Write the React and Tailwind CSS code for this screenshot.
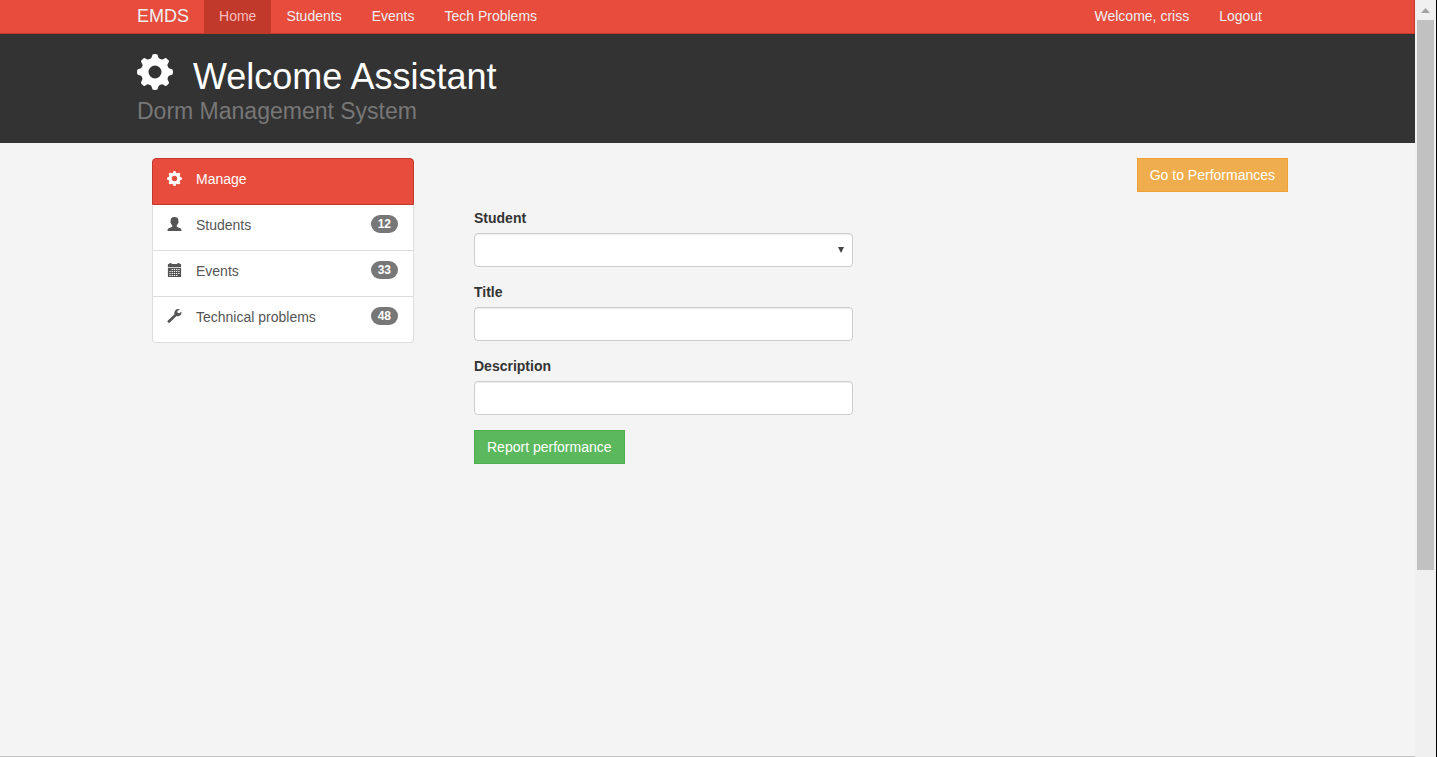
import React from "react";

const TEETH = [0, 45, 90, 135, 180, 225, 270, 315];

function GearIcon({ className }) {
  return (
    <svg viewBox="0 0 36 36" className={className} fill="currentColor" aria-hidden="true">
      <circle cx="18" cy="18" r="10.2" fill="none" stroke="currentColor" strokeWidth="7.4" />
      {TEETH.map((a) => (
        <path
          key={a}
          transform={`rotate(${a} 18 18)`}
          d="M12.6 5.6 Q14.8 4.6 15.3 1.2 Q15.4 .3 16.3 .2 Q18 0 19.7 .2 Q20.6 .3 20.7 1.2 Q21.2 4.6 23.4 5.6 L21 8 H15 Z"
        />
      ))}
    </svg>
  );
}

function UserIcon({ className }) {
  return (
    <svg viewBox="0 0 14 14" className={className} fill="currentColor" aria-hidden="true">
      <path d="M7 0C9.4 0 10.9 1.2 10.9 3.3C10.9 3.8 10.8 4.1 10.8 4.4C11.3 4.6 11.2 5.8 10.6 6.2C10.3 7.2 9.7 8 9.2 8.4V9.4C9.5 10.2 13 10.8 13.7 11.9C13.9 12.4 14 13.2 14 14H0C0 13.2 .1 12.4 .3 11.9C1 10.8 4.5 10.2 4.8 9.4V8.4C4.3 8 3.7 7.2 3.4 6.2C2.8 5.8 2.7 4.6 3.2 4.4C3.2 4.1 3.1 3.8 3.1 3.3C3.1 1.2 4.6 0 7 0Z" />
    </svg>
  );
}

function CalendarIcon({ className }) {
  return (
    <svg viewBox="0 0 14 14" className={className} fill="currentColor" aria-hidden="true">
      <path d="M2 0H4V1H10V0H12V1H13Q13.6 1 13.6 1.6V4H.4V1.6Q.4 1 1 1H2Z" />
      <path
        fillRule="evenodd"
        d="M.4 4.8H13.6V13.4Q13.6 14 13 14H1Q.4 14 .4 13.4ZM4.2 6V7.1H5.4V6ZM6.4 6V7.1H7.6V6ZM8.6 6V7.1H9.8V6ZM10.8 6V7.1H12V6ZM2 8V9.1H3.2V8ZM4.2 8V9.1H5.4V8ZM6.4 8V9.1H7.6V8ZM8.6 8V9.1H9.8V8ZM10.8 8V9.1H12V8ZM2 10V11.1H3.2V10ZM4.2 10V11.1H5.4V10ZM6.4 10V11.1H7.6V10ZM8.6 10V11.1H9.8V10ZM10.8 10V11.1H12V10ZM2 12V13H3.2V12ZM4.2 12V13H5.4V12ZM6.4 12V13H7.6V12ZM8.6 12V13H9.8V12Z"
      />
    </svg>
  );
}

function WrenchIcon({ className }) {
  return (
    <svg viewBox="0 0 14 14" className={className} fill="currentColor" aria-hidden="true">
      <path d="M12.3 .4L9.8 2L10 3.8L11.6 4.3L13.9 2.7C14.3 4.7 13.3 6.6 11.4 7.1C10.5 7.4 9.7 7.3 9 7L2.4 13.6C1.9 14.1 1.2 14.1 .7 13.6L.4 13.3C-.1 12.8 -.1 12.1 .4 11.6L7 5.2C6.6 3.9 6.8 2.5 7.8 1.4C9 .2 10.8 -.3 12.3 .4Z" />
    </svg>
  );
}

const SECTIONS = [
  { label: "Students", count: 12, Icon: UserIcon },
  { label: "Events", count: 33, Icon: CalendarIcon },
  { label: "Technical problems", count: 48, Icon: WrenchIcon },
];

const FIELD =
  "block h-[34px] w-full rounded border border-[#ccc] bg-white px-3 text-sm text-[#555] shadow-[inset_0_1px_1px_rgba(0,0,0,0.075)]";

function NavLink({ children }) {
  return (
    <a href="#" className="px-[15px] pt-[6px] text-[#ecf0f1]">
      {children}
    </a>
  );
}

function Navbar() {
  return (
    <nav className="border-r border-b border-[#c0392b] bg-[#e74c3c]">
      <div className="mx-auto flex h-[33px] max-w-[1170px] px-[15px]">
        <a href="#" className="pt-[6px] pr-[15px] text-lg leading-5 text-[#ecf0f1]">
          EMDS
        </a>
        <a href="#" aria-current="page" className="bg-[#c0392b] px-[15px] pt-[6px] text-[#ffbbbc]">
          Home
        </a>
        <NavLink>Students</NavLink>
        <NavLink>Events</NavLink>
        <NavLink>Tech Problems</NavLink>
        <div className="ml-auto flex">
          <NavLink>Welcome, criss</NavLink>
          <NavLink>Logout</NavLink>
        </div>
      </div>
    </nav>
  );
}

function PageHeader() {
  return (
    <header className="bg-[#333]">
      <div className="mx-auto max-w-[1171px] px-[15px] pt-5 pb-5">
        <h1 className="flex items-start gap-5 text-4xl leading-[46px] text-white">
          <GearIcon className="size-9" />
          Welcome Assistant
        </h1>
        <p className="text-[23px] leading-[23px] text-[#777]">Dorm Management System</p>
      </div>
    </header>
  );
}

function Sidebar() {
  return (
    <aside className="w-[262px] shrink-0">
      <a
        href="#"
        className="flex h-[47px] items-start gap-[14px] rounded-t border border-[#c0392b] bg-[#e74c3c] px-[14px] pt-[10px] text-white"
      >
        <GearIcon className="mt-[2px] size-[15px]" />
        Manage
      </a>
      <div className="overflow-hidden rounded-b border border-t-0 border-[#ddd] bg-white">
        {SECTIONS.map(({ label, count, Icon }) => (
          <a
            key={label}
            href="#"
            className="flex h-[46px] items-start gap-[14px] border-b border-[#ddd] pt-[10px] pr-[15px] pl-[14px] text-[#555] last:h-[45px] last:border-b-0"
          >
            <Icon className="mt-[2px] h-[14px] w-[15px]" />
            {label}
            <span className="ml-auto rounded-[10px] bg-[#777] px-[7px] py-[3px] text-xs leading-3 font-bold text-white">
              {count}
            </span>
          </a>
        ))}
      </div>
    </aside>
  );
}

function PerformanceForm() {
  return (
    <form className="mt-4 flex w-full max-w-[379px] flex-col gap-[15px]">
      <div>
        <label htmlFor="student" className="mb-[5px] block font-bold">
          Student
        </label>
        <div className="relative">
          <select id="student" className={FIELD + " appearance-none"}>
            <option value=""></option>
          </select>
          <svg
            viewBox="0 0 6 6"
            className="pointer-events-none absolute top-[14px] right-[9px] size-[6px] fill-[#444]"
            aria-hidden="true"
          >
            <path d="M0 0H6L3 6Z" />
          </svg>
        </div>
      </div>
      <div>
        <label htmlFor="title" className="mb-[5px] block font-bold">
          Title
        </label>
        <input id="title" type="text" className={FIELD} />
      </div>
      <div>
        <label htmlFor="description" className="mb-[5px] block font-bold">
          Description
        </label>
        <input id="description" type="text" className={FIELD} />
      </div>
      <button
        type="button"
        className="h-[34px] self-start border border-[#4cae4c] bg-[#5cb85c] px-3 text-white"
      >
        Report performance
      </button>
    </form>
  );
}

function Scrollbar() {
  return (
    <div className="flex w-[22px] shrink-0 flex-col border-r border-black bg-[#f0f0f0] pr-[2px] pl-[2px]" aria-hidden="true">
      <div className="flex h-5 items-center justify-center">
        <svg viewBox="0 0 9 5" className="h-[5px] w-[9px] fill-[#a3a3a3]">
          <path d="M4.5 0L9 5H0Z" />
        </svg>
      </div>
      <div className="h-[550px] bg-[#c1c1c1]" />
    </div>
  );
}

export default function App() {
  return (
    <div className="flex min-h-screen bg-[#f4f4f4] font-['Liberation_Sans',Arial,sans-serif] text-sm leading-5 text-[#333]">
      <div className="min-w-0 flex-1 border-b border-[#c1c1c1]">
        <Navbar />
        <PageHeader />
        <main className="mx-auto flex max-w-[1171px] gap-[60px] pt-[15px] pr-[5px] pl-[30px]">
          <Sidebar />
          <section className="flex flex-1 flex-col">
            <button
              type="button"
              className="h-[34px] self-end border border-[#eea236] bg-[#f0ad4e] px-3 text-white"
            >
              Go to Performances
            </button>
            <PerformanceForm />
          </section>
        </main>
      </div>
      <Scrollbar />
    </div>
  );
}
